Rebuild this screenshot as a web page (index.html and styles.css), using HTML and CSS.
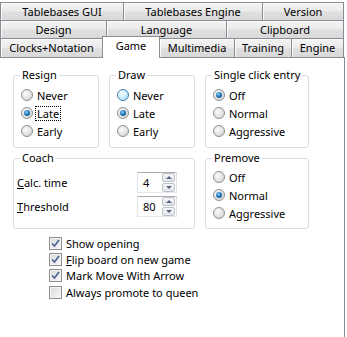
FILE: index.html
```html
<!DOCTYPE html>
<html lang="en">
<head>
  <meta charset="UTF-8">
  <title>Options - Game</title>
  <link rel="stylesheet" href="styles.css">
</head>
<body>

<div class="tabs">
  <div class="tab-row">
    <div class="tab w-tbgui">Tablebases GUI</div>
    <div class="tab w-tbeng">Tablebases Engine</div>
    <div class="tab w-version">Version</div>
  </div>
  <div class="tab-row">
    <div class="tab w-design">Design</div>
    <div class="tab w-lang">Language</div>
    <div class="tab w-clip">Clipboard</div>
  </div>
  <div class="tab-row front">
    <div class="tab w-clocks">Clocks+Notation</div>
    <div class="tab active w-game">Game</div>
    <div class="tab w-multi">Multimedia</div>
    <div class="tab w-train">Training</div>
    <div class="tab w-engine">Engine</div>
  </div>
</div>

<div class="page">
  <div class="groups">
    <fieldset class="group">
      <legend>Resign</legend>
      <div class="option"><span class="radio"></span>Never</div>
      <div class="option"><span class="radio checked"></span><span class="focus">Late</span></div>
      <div class="option"><span class="radio"></span>Early</div>
    </fieldset>

    <fieldset class="group">
      <legend>Draw</legend>
      <div class="option"><span class="radio hover"></span>Never</div>
      <div class="option"><span class="radio checked"></span>Late</div>
      <div class="option"><span class="radio"></span>Early</div>
    </fieldset>

    <fieldset class="group">
      <legend>Single click entry</legend>
      <div class="option"><span class="radio checked"></span>Off</div>
      <div class="option"><span class="radio"></span>Normal</div>
      <div class="option"><span class="radio"></span>Aggressive</div>
    </fieldset>

    <fieldset class="group coach">
      <legend>Coach</legend>
      <div class="field">
        <label><u>C</u>alc. time</label>
        <div class="spin">
          <span class="spin-value">4</span>
          <span class="spin-buttons">
            <span class="spin-btn"><span class="arrow-up"></span></span>
            <span class="spin-btn"><span class="arrow-down"></span></span>
          </span>
        </div>
      </div>
      <div class="field">
        <label><u>T</u>hreshold</label>
        <div class="spin">
          <span class="spin-value">80</span>
          <span class="spin-buttons">
            <span class="spin-btn"><span class="arrow-up"></span></span>
            <span class="spin-btn"><span class="arrow-down"></span></span>
          </span>
        </div>
      </div>
    </fieldset>

    <fieldset class="group premove">
      <legend>Premove</legend>
      <div class="option"><span class="radio"></span>Off</div>
      <div class="option"><span class="radio checked"></span>Normal</div>
      <div class="option"><span class="radio"></span>Aggressive</div>
    </fieldset>
  </div>

  <div class="checks">
    <div class="check-row">
      <span class="box"><svg width="9" height="9" viewBox="0 0 9 9"><path d="M1 4.5 L3.5 7 L8 1" fill="none" stroke="#4a5d94" stroke-width="1.6"/></svg></span>
      Show opening
    </div>
    <div class="check-row">
      <span class="box"><svg width="9" height="9" viewBox="0 0 9 9"><path d="M1 4.5 L3.5 7 L8 1" fill="none" stroke="#4a5d94" stroke-width="1.6"/></svg></span>
      <span><u>F</u>lip board on new game</span>
    </div>
    <div class="check-row">
      <span class="box"><svg width="9" height="9" viewBox="0 0 9 9"><path d="M1 4.5 L3.5 7 L8 1" fill="none" stroke="#4a5d94" stroke-width="1.6"/></svg></span>
      Mark Move With Arrow
    </div>
    <div class="check-row">
      <span class="box"></span>
      Always promote to queen
    </div>
  </div>
</div>

</body>
</html>
```

FILE: styles.css
```css
body {
  margin: 0;
  padding-top: 2px;
  background-color: #fff;
  font-family: "Noto Sans", sans-serif;
  font-size: 11px;
  color: #000;
}

/* tab strip */
.tabs {
  width: 344px;
}

.tab-row {
  display: flex;
  height: 18px;
}

.tab-row.front {
  height: 19px;
}

.tab {
  box-sizing: border-box;
  height: 100%;
  border-top: 1px solid #898c95;
  border-left: 1px solid #898c95;
  background: linear-gradient(#f4f4f4, #ebebeb 45%, #dfdfdf 55%, #d9d9d9);
  box-shadow: inset 1px 1px 0 #fbfbfb;
  text-align: center;
  line-height: 17px;
  white-space: nowrap;
}

.tab:last-child {
  border-right: 1px solid #898c95;
}

.tab.active {
  position: relative;
  z-index: 1;
  height: 22px;
  margin-top: -2px;
  margin-right: -1px;
  border-right: 1px solid #898c95;
  background: #fff;
  box-shadow: none;
}

.w-tbgui { width: 123px; }
.w-tbeng { width: 139px; }
.w-version { width: 82px; }
.w-design { width: 106px; }
.w-lang { width: 120px; }
.w-clip { width: 118px; }
.w-clocks { width: 102px; }
.w-game { width: 58px; }
.w-multi { width: 75px; }
.w-train { width: 57px; }
.w-engine { width: 53px; }

/* page */
.page {
  box-sizing: border-box;
  width: 345px;
  height: 280px;
  padding: 9px 0 0 13px;
  border-top: 1px solid #898c95;
  border-right: 1px solid #898c95;
  background-color: #fff;
}

.groups {
  display: grid;
  grid-template-columns: 86px 86px 104px;
  grid-template-rows: 81px 79px;
  column-gap: 10px;
  row-gap: 2px;
}

.group {
  margin: 0;
  min-width: 0;
  padding: 3px 0 0 6px;
  border: 1px solid #d5dfe5;
  border-radius: 3px;
}

.group legend {
  padding: 0 2px;
  line-height: 16px;
}

.coach {
  grid-column: 1 / 3;
  padding: 4px 0 0 3px;
}

.coach legend {
  margin-left: 3px;
}

.premove {
  padding-top: 2px;
}

.option {
  display: flex;
  align-items: center;
  height: 18px;
  padding-left: 1px;
}

.radio {
  position: relative;
  box-sizing: border-box;
  width: 12px;
  height: 12px;
  margin-right: 4px;
  border: 1px solid #8e8f8f;
  border-radius: 50%;
  background: radial-gradient(circle at 35% 35%, #fbfbfb 0, #e7e7e7 45%, #cdcdcd 100%);
}

.radio.hover {
  border-color: #3c7fb1;
  background: radial-gradient(circle at 35% 35%, #f2fbfe 0, #cdeefb 50%, #9ed8f3 100%);
}

.radio.checked::after {
  content: "";
  position: absolute;
  left: 2px;
  top: 2px;
  width: 6px;
  height: 6px;
  border-radius: 50%;
  background: radial-gradient(circle at 40% 35%, #8cd3f5 0, #1f74b5 50%, #0a3f75 100%);
}

.focus {
  line-height: 13px;
  padding: 0 1px;
  margin-left: -2px;
  border: 1px dotted #000;
}

/* coach fields */
.field {
  display: flex;
  align-items: center;
  height: 24px;
}

.field label {
  width: 120px;
}

.spin {
  box-sizing: border-box;
  display: flex;
  align-items: center;
  justify-content: space-between;
  width: 40px;
  height: 21px;
  padding: 0 1px 0 5px;
  border: 1px solid;
  border-color: #abadb3 #dbdfe6 #e3e9ef #e2e3ea;
}

.spin-buttons {
  display: flex;
  flex-direction: column;
  gap: 1px;
}

.spin-btn {
  box-sizing: border-box;
  display: flex;
  align-items: center;
  justify-content: center;
  width: 13px;
  height: 9px;
  border: 1px solid #bcc0c7;
  border-radius: 2px;
  background: linear-gradient(#f6f7f9, #e1e4e9);
}

.arrow-up {
  border-left: 3px solid transparent;
  border-right: 3px solid transparent;
  border-bottom: 3px solid #56647f;
}

.arrow-down {
  border-left: 3px solid transparent;
  border-right: 3px solid transparent;
  border-top: 3px solid #56647f;
}

/* checkboxes */
.checks {
  margin: 6px 0 0 36px;
}

.check-row {
  display: flex;
  align-items: center;
  height: 16.33px;
}

.box {
  box-sizing: border-box;
  display: flex;
  align-items: center;
  justify-content: center;
  width: 13px;
  height: 13px;
  margin-right: 4px;
  border: 1px solid #8e8f8f;
  background: linear-gradient(135deg, #d8d8d8, #f9f9f9);
  box-shadow: inset 0 0 0 1px #f4f4f4;
}
```
